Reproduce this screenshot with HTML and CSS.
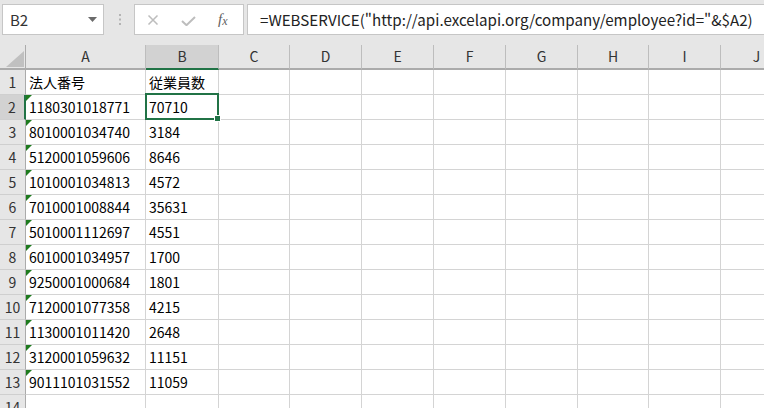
FILE: index.html
```html
<!DOCTYPE html>
<html lang="ja">
<head>
<meta charset="utf-8">
<title>Excel</title>
<link rel="stylesheet" href="styles.css">
</head>
<body>
<div class="app">
  <div class="bar">
    <div class="namebox">
      <span class="ref">B2</span>
      <svg class="drop" width="9" height="5" viewBox="0 0 9 5"><path d="M0 0H9L4.5 5Z" fill="#6b6b6b"/></svg>
    </div>
    <div class="grip">
      <svg width="3" height="11" viewBox="0 0 3 11"><rect x="0" y="0" width="2" height="2" fill="#b4b4b4"/><rect x="0" y="4.5" width="2" height="2" fill="#b4b4b4"/><rect x="0" y="9" width="2" height="2" fill="#b4b4b4"/></svg>
    </div>
    <div class="fxbox">
      <svg class="cancel" width="12" height="10" viewBox="0 0 12 10"><path d="M1.5 0.5L10.5 9.5M10.5 0.5L1.5 9.5" stroke="#bdbdbd" stroke-width="1.5" fill="none"/></svg>
      <svg class="enter" width="15" height="10" viewBox="0 0 15 10"><path d="M1 5L5.5 9.2L14 1" stroke="#bdbdbd" stroke-width="2" fill="none"/></svg>
      <span class="fx">f<span class="x">x</span></span>
    </div>
    <div class="formula">=WEBSERVICE("http://api.excelapi.org/company/employee?id="&amp;$A2)</div>
  </div>

  <div class="sheet">
    <div class="corner"><span class="corner-tri"></span></div>
    <div class="h">A</div>
    <div class="h sel">B</div>
    <div class="h">C</div>
    <div class="h">D</div>
    <div class="h">E</div>
    <div class="h">F</div>
    <div class="h">G</div>
    <div class="h">H</div>
    <div class="h">I</div>
    <div class="h">J</div>

    <div class="r">1</div><div class="c">法人番号</div><div class="c">従業員数</div><div class="c"></div><div class="c"></div><div class="c"></div><div class="c"></div><div class="c"></div><div class="c"></div><div class="c"></div><div class="c"></div>
    <div class="r rsel">2</div><div class="c t">1180301018771</div><div class="c active">70710<span class="handle"></span></div><div class="c"></div><div class="c"></div><div class="c"></div><div class="c"></div><div class="c"></div><div class="c"></div><div class="c"></div><div class="c"></div>
    <div class="r">3</div><div class="c t">8010001034740</div><div class="c">3184</div><div class="c"></div><div class="c"></div><div class="c"></div><div class="c"></div><div class="c"></div><div class="c"></div><div class="c"></div><div class="c"></div>
    <div class="r">4</div><div class="c t">5120001059606</div><div class="c">8646</div><div class="c"></div><div class="c"></div><div class="c"></div><div class="c"></div><div class="c"></div><div class="c"></div><div class="c"></div><div class="c"></div>
    <div class="r">5</div><div class="c t">1010001034813</div><div class="c">4572</div><div class="c"></div><div class="c"></div><div class="c"></div><div class="c"></div><div class="c"></div><div class="c"></div><div class="c"></div><div class="c"></div>
    <div class="r">6</div><div class="c t">7010001008844</div><div class="c">35631</div><div class="c"></div><div class="c"></div><div class="c"></div><div class="c"></div><div class="c"></div><div class="c"></div><div class="c"></div><div class="c"></div>
    <div class="r">7</div><div class="c t">5010001112697</div><div class="c">4551</div><div class="c"></div><div class="c"></div><div class="c"></div><div class="c"></div><div class="c"></div><div class="c"></div><div class="c"></div><div class="c"></div>
    <div class="r">8</div><div class="c t">6010001034957</div><div class="c">1700</div><div class="c"></div><div class="c"></div><div class="c"></div><div class="c"></div><div class="c"></div><div class="c"></div><div class="c"></div><div class="c"></div>
    <div class="r">9</div><div class="c t">9250001000684</div><div class="c">1801</div><div class="c"></div><div class="c"></div><div class="c"></div><div class="c"></div><div class="c"></div><div class="c"></div><div class="c"></div><div class="c"></div>
    <div class="r">10</div><div class="c t">7120001077358</div><div class="c">4215</div><div class="c"></div><div class="c"></div><div class="c"></div><div class="c"></div><div class="c"></div><div class="c"></div><div class="c"></div><div class="c"></div>
    <div class="r">11</div><div class="c t">1130001011420</div><div class="c">2648</div><div class="c"></div><div class="c"></div><div class="c"></div><div class="c"></div><div class="c"></div><div class="c"></div><div class="c"></div><div class="c"></div>
    <div class="r">12</div><div class="c t">3120001059632</div><div class="c">11151</div><div class="c"></div><div class="c"></div><div class="c"></div><div class="c"></div><div class="c"></div><div class="c"></div><div class="c"></div><div class="c"></div>
    <div class="r">13</div><div class="c t">9011101031552</div><div class="c">11059</div><div class="c"></div><div class="c"></div><div class="c"></div><div class="c"></div><div class="c"></div><div class="c"></div><div class="c"></div><div class="c"></div>
    <div class="r">14</div><div class="c"></div><div class="c"></div><div class="c"></div><div class="c"></div><div class="c"></div><div class="c"></div><div class="c"></div><div class="c"></div><div class="c"></div><div class="c"></div>
  </div>
</div>
</body>
</html>
```
FILE: styles.css
```css
html, body {
  margin: 0;
  padding: 0;
  background: #ffffff;
}
.app {
  width: 764px;
  height: 408px;
  overflow: hidden;
  font-family: "Noto Sans CJK JP", "Noto Sans", sans-serif;
  color: #000;
}
.bar {
  height: 45px;
  box-sizing: border-box;
  background: #e6e6e6;
  display: flex;
  align-items: flex-start;
  padding: 4px 0 0 2px;
}
.namebox {
  width: 102px;
  height: 31px;
  box-sizing: border-box;
  background: #fff;
  border: 1px solid #c6c6c6;
  display: flex;
  align-items: center;
  justify-content: space-between;
  padding: 0 6px 0 7px;
  flex-shrink: 0;
}
.ref {
  font-size: 15px;
  color: #333;
}
.drop { margin-bottom: 1px; }
.grip {
  width: 30px;
  height: 31px;
  display: flex;
  align-items: center;
  justify-content: center;
  padding-left: 2px;
  box-sizing: border-box;
  flex-shrink: 0;
}
.fxbox {
  width: 110px;
  height: 31px;
  box-sizing: border-box;
  background: #fff;
  border: 1px solid #c6c6c6;
  display: flex;
  align-items: center;
  padding-left: 12px;
  flex-shrink: 0;
}
.cancel { margin-top: 1px; }
.enter { margin-left: 22px; margin-top: 2px; }
.fx {
  margin-left: 22px;
  font-family: "Liberation Serif", serif;
  font-style: italic;
  font-size: 15px;
  color: #5f5f5f;
  line-height: 1;
}
.fx .x { font-size: 12px; position: relative; top: 1px; }
.formula {
  flex: 1;
  margin-left: 3px;
  margin-right: -6px;
  height: 31px;
  box-sizing: border-box;
  background: #fff;
  border: 1px solid #c6c6c6;
  padding-left: 12px;
  font-size: 15.15px;
  line-height: 28px;
  color: #222;
  white-space: nowrap;
  overflow: hidden;
}
.sheet {
  display: grid;
  grid-template-columns: 26px 120px 73px 71px 72px 72px 72px 72px 71px 72px 72px;
  grid-auto-rows: 25px;
}
.corner {
  background: #e6e6e6;
  border-right: 1px solid #ababab;
  border-bottom: 2px solid #ababab;
  box-sizing: border-box;
  position: relative;
}
.corner-tri {
  position: absolute;
  right: 1px;
  bottom: 1px;
  width: 18px;
  height: 16px;
  background: #c0c0c0;
  clip-path: polygon(100% 0, 100% 100%, 0 100%);
}
.h {
  background: #e6e6e6;
  border-right: 1px solid #bdbdbd;
  border-bottom: 2px solid #ababab;
  box-sizing: border-box;
  text-align: center;
  font-size: 14px;
  line-height: 23px;
  color: #333;
}
.h.sel {
  background: #d2d2d2;
  border-bottom-color: #217346;
}
.r {
  background: #e6e6e6;
  border-right: 1px solid #ababab;
  border-bottom: 1px solid #cfcfcf;
  box-sizing: border-box;
  text-align: center;
  font-size: 14px;
  line-height: 24px;
  color: #333;
}
.r.rsel {
  background: #d2d2d2;
  border-right: 2px solid #217346;
}
.c {
  border-right: 1px solid #d4d4d4;
  border-bottom: 1px solid #d4d4d4;
  box-sizing: border-box;
  padding-left: 3px;
  font-size: 14px;
  line-height: 24px;
  white-space: nowrap;
  overflow: hidden;
  position: relative;
}
.c.t::before {
  content: "";
  position: absolute;
  top: 0;
  left: 0;
  width: 6px;
  height: 6px;
  background: #1e7b1e;
  clip-path: polygon(0 0, 100% 0, 0 100%);
}
.c.active { overflow: visible; }
.c.active::after {
  content: "";
  position: absolute;
  top: -2px;
  left: -1px;
  right: -1px;
  bottom: -1px;
  border: 2px solid #217346;
  pointer-events: none;
}
.handle {
  position: absolute;
  right: -3px;
  bottom: -3px;
  width: 5px;
  height: 5px;
  background: #217346;
  border: 1px solid #fff;
  z-index: 2;
}
```
